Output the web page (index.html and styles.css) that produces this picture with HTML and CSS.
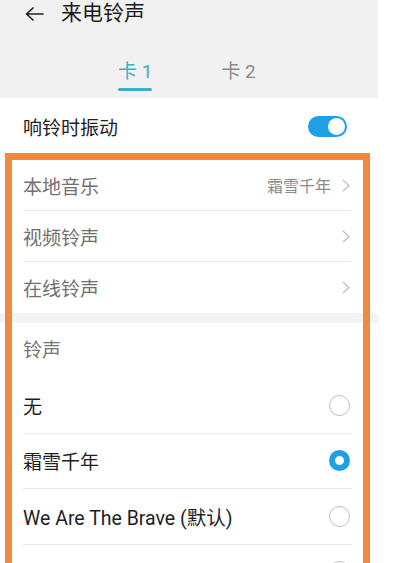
FILE: index.html
```html
<!DOCTYPE html>
<html lang="zh-CN">
<head>
  <meta charset="UTF-8">
  <meta name="viewport" content="width=device-width, initial-scale=1.0">
  <title>来电铃声</title>
  <link rel="stylesheet" href="styles.css">
</head>
<body>
  <div class="screen">
    <div class="top">
      <div class="titlebar">
        <svg class="back" width="19" height="14" viewBox="0 0 19 14"><path d="M8 1 L1.5 7 L8 13 M1.5 7 H18" fill="none" stroke="#222" stroke-width="1.7" stroke-linecap="round" stroke-linejoin="round"/></svg>
        <h1 class="title">来电铃声</h1>
      </div>
      <ul class="tabs">
        <li class="tab on">卡 1</li>
        <li class="tab">卡 2</li>
      </ul>
    </div>

    <div class="row_toggle">
      <span>响铃时振动</span>
      <span class="switch"></span>
    </div>

    <ul class="group links">
      <li class="item"><span>本地音乐</span><span class="right">霜雪千年 <svg width="8" height="13" viewBox="0 0 8 13"><path d="M1 1 L7 6.5 L1 12" fill="none" stroke="#bdbdbd" stroke-width="1.2"/></svg></span></li>
      <li class="item"><span>视频铃声</span><span class="right"><svg width="8" height="13" viewBox="0 0 8 13"><path d="M1 1 L7 6.5 L1 12" fill="none" stroke="#bdbdbd" stroke-width="1.2"/></svg></span></li>
      <li class="item"><span>在线铃声</span><span class="right"><svg width="8" height="13" viewBox="0 0 8 13"><path d="M1 1 L7 6.5 L1 12" fill="none" stroke="#bdbdbd" stroke-width="1.2"/></svg></span></li>
    </ul>

    <div class="band"></div>

    <div class="sub_head">铃声</div>
    <ul class="group radios">
      <li class="item dark"><span>无</span><span class="radio"></span></li>
      <li class="item dark"><span>霜雪千年</span><span class="radio checked"></span></li>
      <li class="item dark"><span class="latin">We Are The Brave (默认)</span><span class="radio"></span></li>
      <li class="item dark"><span></span><span class="radio"></span></li>
    </ul>

    <!-- 강조 테두리 -->
    <div class="frame"></div>
  </div>
</body>
</html>
```

FILE: styles.css
```css
*{margin: 0; padding: 0; box-sizing: border-box;}
html, body{height: 563px; overflow: hidden;}
body{
  background: #fff;
  font-family: Roboto, "Noto Sans CJK SC", sans-serif;
  color: #1e1e1e;
}
ul{list-style: none;}
.screen{
  width: 378px;
  position: relative;
}
.top{
  background: #f1f1f1;
  height: 98px;
}
.titlebar{
  display: flex;
  align-items: center;
  height: 27px;
  padding-left: 25px;
  gap: 17px;
}
.title{
  font-size: 21px;
  font-weight: normal;
  line-height: 27px;
  color: #1c1c1c;
}
.tabs{
  display: flex;
  gap: 69px;
  padding-left: 118px;
  margin-top: 33px;
}
.tab{
  font-size: 19px;
  line-height: 24px;
  color: #8a8a8a;
}
.tab::after{
  content: "";
  display: block;
  height: 3px;
  margin-top: 4px;
  border-radius: 2px;
}
.tab.on{color: #3aafc8;}
.tab.on::after{background: #3aafc8;}

.row_toggle{
  height: 57px;
  display: flex;
  align-items: center;
  justify-content: space-between;
  padding: 0 31px 0 23px;
  font-size: 19px;
  color: #222;
}
.switch{
  width: 39px; height: 21px;
  border-radius: 11px;
  background: #1e9fe6;
  position: relative;
}
.switch::after{
  content: "";
  position: absolute;
  right: 2px; top: 2px;
  width: 17px; height: 17px;
  border-radius: 50%;
  background: #fff;
}

.links{padding-top: 5px;}
.item{
  display: flex;
  align-items: center;
  justify-content: space-between;
  margin: 0 26px 0 23px;
  padding-right: 2px;
  border-bottom: 1px solid #e9e9e9;
  font-size: 19px;
  color: #707070;
}
.links .item{height: 51px;}
.links .item:last-child{border-bottom: none; height: 51px;}
.right{
  display: flex;
  align-items: center;
  gap: 11px;
  font-size: 16px;
  color: #8a8a8a;
}
.band{
  height: 10px;
  background: #f4f4f4;
}
.sub_head{
  height: 55px;
  line-height: 55px;
  padding-left: 23px;
  font-size: 19px;
  color: #767676;
}
.radios .item{height: 55.5px;}
.item.dark{color: #1e1e1e;}
.latin{font-size: 19.5px;}
.radio{
  width: 21px; height: 21px;
  border-radius: 50%;
  border: 1.5px solid #bcbcbc;
}
.radio.checked{border: 6px solid #1e9fe6;}

.frame{
  position: absolute;
  left: 5px; top: 153px;
  width: 365px; height: 440px;
  border: 7px solid #ef8a3e;
}
```
